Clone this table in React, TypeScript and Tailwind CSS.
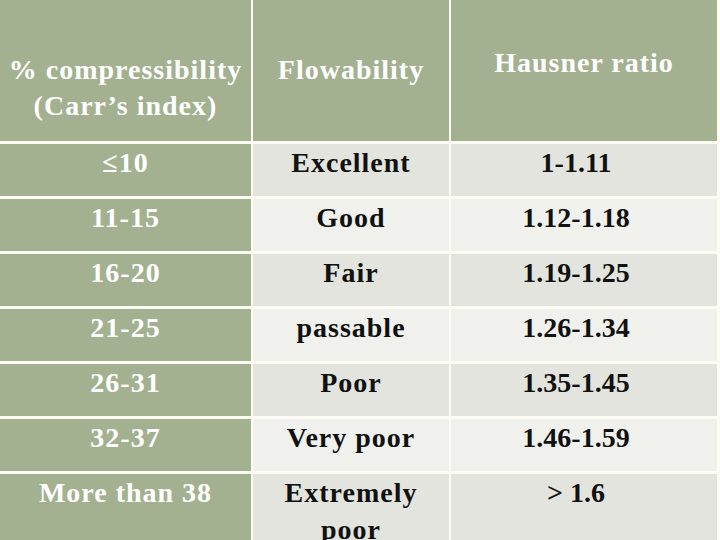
const ROWS: { carr: string; flow: string; hausner: string }[] = [
  { carr: "≤10", flow: "Excellent", hausner: "1-1.11" },
  { carr: "11-15", flow: "Good", hausner: "1.12-1.18" },
  { carr: "16-20", flow: "Fair", hausner: "1.19-1.25" },
  { carr: "21-25", flow: "passable", hausner: "1.26-1.34" },
  { carr: "26-31", flow: "Poor", hausner: "1.35-1.45" },
  { carr: "32-37", flow: "Very poor", hausner: "1.46-1.59" },
  { carr: "More than 38", flow: "Extremely poor", hausner: "> 1.6" },
];

export default function App() {
  return (
    <div
      className="w-[720px] h-[540px] overflow-hidden bg-[#fcfcf4] text-[28px] font-bold tracking-[1px] leading-[37px]"
      style={{ fontFamily: '"Liberation Serif", "Times New Roman", serif' }}
    >
      <div className="grid grid-cols-[251px_196px_266px] gap-x-[2px] gap-y-[3px]">
        {/* header */}
        <div className="h-[141px] bg-[#a3b190] text-white text-center pt-[52px] leading-[36px]">
          % compressibility
          <br />
          (Carr’s index)
        </div>
        <div className="h-[141px] bg-[#a3b190] text-white text-center pt-[52px] leading-[36px]">
          Flowability
        </div>
        <div className="h-[141px] bg-[#a3b190] text-white text-center pt-[45px] leading-[36px]">
          Hausner ratio
        </div>

        {/* body */}
        {ROWS.map((r, i) => {
          const shade = i % 2 === 0 ? "bg-[#e2e4dd]" : "bg-[#f0f1ed]";
          const last = i === ROWS.length - 1;
          const h = last ? "h-[90px]" : "h-[52px]";
          return [
            <div
              key={`a${i}`}
              className={`${h} bg-[#a3b190] text-white text-center`}
            >
              {r.carr}
            </div>,
            <div
              key={`b${i}`}
              className={`${h} ${shade} text-[#111] text-center px-4`}
            >
              {r.flow}
            </div>,
            <div
              key={`c${i}`}
              className={`${h} ${shade} text-[#111] text-center pr-4 tracking-normal`}
            >
              {r.hausner}
            </div>,
          ];
        })}
      </div>
    </div>
  );
}
